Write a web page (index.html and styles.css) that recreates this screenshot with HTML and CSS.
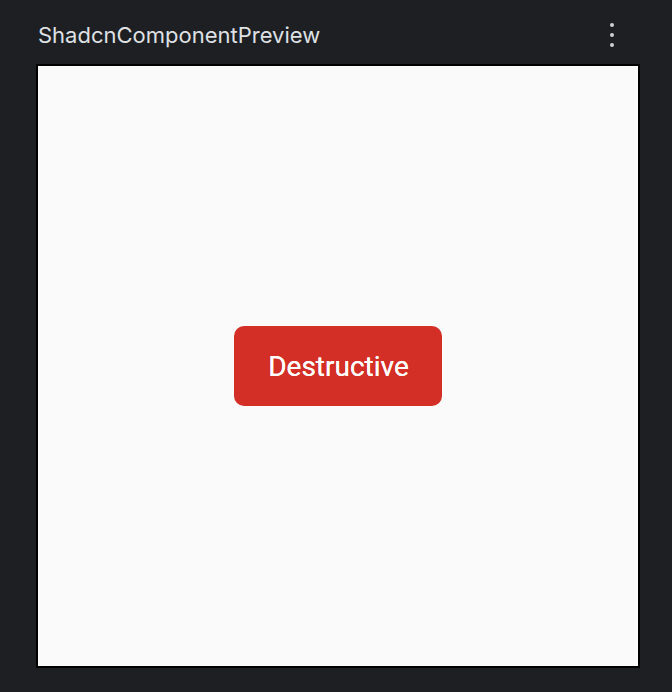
FILE: index.html
```html
<!DOCTYPE html>
<html>
<head>
<meta charset="utf-8">
<link rel="stylesheet" href="styles.css">
</head>
<body>
<div class="app">
  <div class="header">
    <span class="title">ShadcnComponentPreview</span>
    <svg class="more" width="4" height="24" viewBox="0 0 4 24">
      <circle cx="2" cy="2" r="2" fill="#ced0d6"/>
      <circle cx="2" cy="12" r="2" fill="#ced0d6"/>
      <circle cx="2" cy="22" r="2" fill="#ced0d6"/>
    </svg>
  </div>
  <div class="frame">
    <button class="btn-destructive">Destructive</button>
  </div>
</div>
</body>
</html>
```
FILE: styles.css
```css
html, body {
  margin: 0;
  padding: 0;
  background: #1e1f22;
  width: 672px;
  height: 692px;
  overflow: hidden;
}
.app {
  padding: 0 0 0 36px;
}
.header {
  height: 64px;
  display: flex;
  align-items: center;
  justify-content: space-between;
  padding: 0 58px 0 2px;
}
.title {
  font-family: Inter, "Noto Sans", sans-serif;
  font-size: 22px;
  color: #dfe1e5;
  position: relative;
  top: 3px;
}
.more {
  display: block;
  position: relative;
  top: 3px;
}
.frame {
  width: 600px;
  height: 600px;
  border: 2px solid #000;
  background: #fafafa;
  display: flex;
  align-items: center;
  justify-content: center;
}
.btn-destructive {
  width: 208px;
  height: 80px;
  border: none;
  border-radius: 10px;
  background: #d32f27;
  color: #fff;
  font-family: Roboto, sans-serif;
  font-size: 28px;
  font-weight: 400;
  padding: 0 0 0 1px;
  text-shadow: 0 0 0.5px #fff;
}
```
